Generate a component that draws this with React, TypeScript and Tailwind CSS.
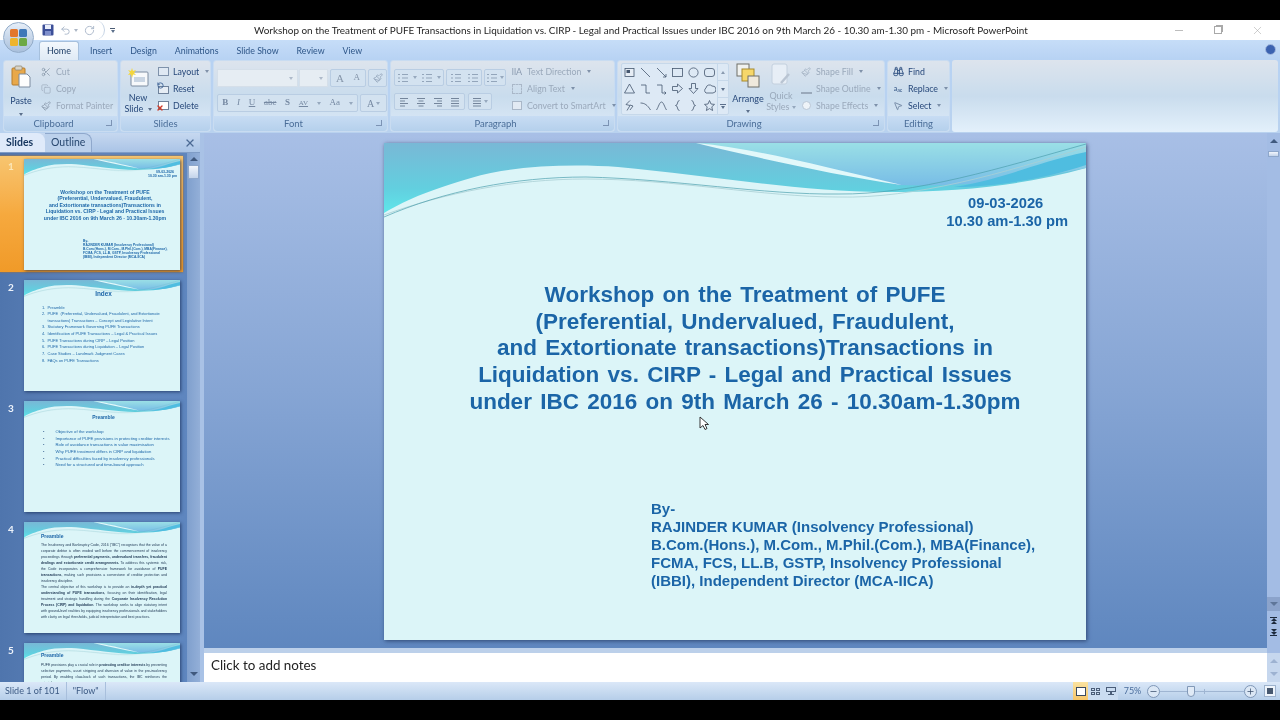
import type { ReactNode } from "react";
import {
  Binoculars,
  Copy,
  Minus,
  MousePointer2,
  Paintbrush,
  Plus,
  RotateCcw,
  Scissors,
  Undo2,
  X,
} from "lucide-react";

const uiFont = "font-['Lato',sans-serif]";
const slideFont = "font-['Liberation_Sans',sans-serif]";

function Wave() {
  return (
    <svg viewBox="0 0 702 80" preserveAspectRatio="none" className="absolute left-0 top-0 w-full h-[16.1%]">
      <defs>
        <linearGradient id="band" x1="0" y1="0" x2="0" y2="1">
          <stop offset="0" stopColor="#79b8d6" />
          <stop offset="0.65" stopColor="#62cfdf" />
          <stop offset="1" stopColor="#5fe6ea" />
        </linearGradient>
        <linearGradient id="corner" x1="0" y1="0" x2="0" y2="1">
          <stop offset="0" stopColor="#9adfe6" />
          <stop offset="1" stopColor="#78bde6" />
        </linearGradient>
      </defs>
      <path d="M0 0H702V25C640 42 580 49 500 49C420 49 320 32 234 24C190 21 130 22 87 35C50 46 25 55 0 70Z" fill="url(#band)" />
      <path d="M312 0H702V25C640 38 580 44 514 42C440 25 370 8 312 0Z" fill="url(#corner)" />
      <path d="M312 0C370 5 440 24 518 42C450 32 370 14 312 0Z" fill="#e2f8fa" />
      <path d="M702 9C650 20 620 36 570 44C610 44 660 36 702 22Z" fill="#4fbde0" />
      <path d="M0 72C60 50 130 36 202 36C290 36 380 54 454 54C530 56 620 30 702 4" fill="none" stroke="#a9cfd4" strokeWidth="0.8" />
      <path d="M0 74C60 48 130 34 202 34C290 36 380 52 454 51C530 52 620 24 702 1" fill="none" stroke="#4c9fae" strokeWidth="0.7" />
    </svg>
  );
}

function SlideThumb({ children }: { children?: ReactNode }) {
  return (
    <div className={`relative w-[156px] h-[111px] shrink-0 overflow-hidden bg-[#dcf5f8] shadow-[1px_1px_3px_rgba(20,40,80,0.7)] ${slideFont}`}>
      <Wave />
      <div className="relative h-full">{children}</div>
    </div>
  );
}

function ThumbRow({ n, active, children }: { n: number; active?: boolean; children: ReactNode }) {
  return (
    <div
      className={
        active
          ? "flex h-[116px] w-[183px] items-center bg-gradient-to-b from-[#f7c56f] via-[#f6a93e] to-[#f09a28] shadow-[0_0_2px_#b87520] pl-[24px] relative"
          : "flex h-[116px] w-[183px] items-center pl-[24px] relative"
      }
    >
      <span className={`absolute left-[8px] top-[3px] text-[10px] font-bold ${active ? "text-[#fbe7b8]" : "text-[#eef3fb]"}`}>{n}</span>
      <SlideThumb>{children}</SlideThumb>
    </div>
  );
}

function BulletThumb() {
  const items = [
    "Objective of the workshop",
    "Importance of PUFE provisions in protecting creditor interests",
    "Role of avoidance transactions in value maximisation",
    "Why PUFE treatment differs in CIRP and liquidation",
    "Practical difficulties faced by insolvency professionals",
    "Need for a structured and time-bound approach",
  ];
  return (
    <div className="pt-[13px] text-[#1d66a8]">
      <p className="text-center text-[5px] font-bold pl-[3px]">Preamble</p>
      <ul className="mt-[9px] ml-[19px] space-y-[2.2px] text-[4.2px] leading-[4.5px]">
        {items.map((t) => (
          <li key={t} className="flex gap-[11px]">
            <span className="text-[#14407a]">•</span>
            <span className="whitespace-nowrap">{t}</span>
          </li>
        ))}
      </ul>
    </div>
  );
}

function SlidesPane() {
  const index = [
    "1.  Preamble",
    "2.  PUFE  (Preferential, Undervalued, Fraudulent, and Extortionate",
    "     transactions) Transactions – Concept and Legislative Intent",
    "3.  Statutory Framework Governing PUFE Transactions",
    "4.  Identification of PUFE Transactions – Legal & Practical Issues",
    "5.  PUFE Transactions during CIRP – Legal Position",
    "6.  PUFE Transactions during Liquidation – Legal Position",
    "7.  Case Studies – Landmark Judgment Cases",
    "8.  FAQs on PUFE Transactions",
  ];
  return (
    <aside className={`w-[200px] shrink-0 flex flex-col bg-[#a9c2e6] ${uiFont}`}>
      <div className="h-[20px] flex items-end relative bg-gradient-to-b from-[#c6d8f0] to-[#aac4e6] border-b border-[#7f9cc6]">
        <div className="w-[45px] h-[19px] bg-[#dfeafa] rounded-tr-[8px] flex items-center pl-[6px] text-[10.5px] font-bold text-[#16365e]">Slides</div>
        <div className="w-[47px] h-[19px] border-t border-r border-[#8fa8cc] rounded-tr-[8px] bg-[#bcd1ec] flex items-center pl-[6px] text-[10.5px] text-[#27466e]">Outline</div>
        <X className="absolute right-[4px] top-[4px] text-[#4c6a94]" size={12} strokeWidth={2.6} />
      </div>
      <div className="flex-1 flex min-h-0">
        <div className="flex-1 min-w-0 overflow-hidden bg-gradient-to-r from-[#4f75ad] via-[#5f84bb] to-[#5e86bf] pt-[3px] space-y-[5px]">
          <ThumbRow n={1} active>
            <div className="pt-[11px] text-[#1d66a8]">
              <div className="pr-[3px] text-right text-[3.5px] leading-[4.5px] font-bold">
                <p className="pr-[3px]">09-03-2026</p>
                <p>10.30 am-1.30 pm</p>
              </div>
              <div className="mt-[10px] pl-[6px] text-center text-[5.15px] leading-[6.5px] font-bold">
                <p>Workshop on the Treatment of PUFE</p>
                <p>(Preferential, Undervalued, Fraudulent,</p>
                <p>and Extortionate transactions)Transactions in</p>
                <p>Liquidation vs. CIRP - Legal and Practical Issues</p>
                <p>under IBC 2016 on 9th March 26 - 10.30am-1.30pm</p>
              </div>
              <div className="mt-[18px] ml-[59px] text-[3.3px] leading-[4px] font-bold whitespace-nowrap">
                <p>By-</p>
                <p>RAJINDER KUMAR (Insolvency Professional)</p>
                <p>B.Com.(Hons.), M.Com., M.Phil.(Com.), MBA(Finance),</p>
                <p>FCMA, FCS, LL.B, GSTP, Insolvency Professional</p>
                <p>(IBBI), Independent Director (MCA-IICA)</p>
              </div>
            </div>
          </ThumbRow>
          <ThumbRow n={2}>
            <div className="pt-[10px] text-[#1d66a8]">
              <p className="text-center text-[6.4px] font-bold leading-[8px] pl-[3px]">Index</p>
              <div className="mt-[7px] ml-[18px] text-[4px] leading-[6.65px] whitespace-pre">
                {index.map((t) => (
                  <p key={t}>{t}</p>
                ))}
              </div>
            </div>
          </ThumbRow>
          <ThumbRow n={3}>
            <BulletThumb />
          </ThumbRow>
          <ThumbRow n={4}>
            <div className="pt-[11px] pl-[17px] pr-[13px]">
              <p className="text-[5px] font-bold text-[#1d66a8] leading-[6px]">Preamble</p>
              <div className="mt-[3px] text-[3.45px] leading-[6px] text-[#1c3552] text-justify">
                <p>
                  The Insolvency and Bankruptcy Code, 2016 ("IBC") recognises that the value of a corporate debtor is often eroded well before the commencement of insolvency proceedings through{" "}
                  <b>preferential payments, undervalued transfers, fraudulent dealings and extortionate credit arrangements.</b> To address this systemic risk, the Code incorporates a comprehensive framework for avoidance of <b>PUFE transactions</b>, making such provisions a cornerstone of creditor protection and insolvency discipline.
                </p>
                <p>
                  The central objective of this workshop is to provide an <b>in-depth yet practical understanding of PUFE transactions</b>, focusing on their identification, legal treatment and strategic handling during the <b>Corporate Insolvency Resolution Process (CIRP) and liquidation</b>. The workshop seeks to align statutory intent with ground-level realities by equipping insolvency professionals and stakeholders with clarity on legal thresholds, judicial interpretation and best practices.
                </p>
              </div>
            </div>
          </ThumbRow>
          <ThumbRow n={5}>
            <div className="pt-[9px] pl-[17px] pr-[13px]">
              <p className="text-[5px] font-bold text-[#1d66a8] leading-[6px]">Preamble</p>
              <p className="mt-[4px] text-[3.45px] leading-[6px] text-[#1c3552] text-justify">
                PUFE provisions play a crucial role in <b>protecting creditor interests</b> by preventing selective payments, asset stripping and diversion of value in the pre-insolvency period. By enabling claw-back of such transactions, the IBC reinforces the principle
              </p>
            </div>
          </ThumbRow>
        </div>
        <div className="w-[13px] shrink-0 bg-gradient-to-r from-[#7f9fcd] to-[#93afd8] flex flex-col items-center">
          <span className="mt-[4px] w-0 h-0 border-x-[4px] border-x-transparent border-b-[4px] border-b-[#40597e]" />
          <span className="mt-[4px] w-[11px] h-[14px] bg-gradient-to-b from-[#f2f6fc] to-[#c3d3ea] border border-[#8ea7cb]" />
          <span className="mt-auto mb-[6px] w-0 h-0 border-x-[4px] border-x-transparent border-t-[4px] border-t-[#40597e]" />
        </div>
      </div>
    </aside>
  );
}

function MainSlide() {
  return (
    <div className={`relative w-[702px] h-[497px] bg-[#dcf5f8] shadow-[1px_1px_4px_rgba(30,50,90,0.75)] ${slideFont} text-[#1b65a7] font-bold`}>
      <Wave />
      <div className="relative h-full pt-[51px] flex flex-col">
        <div className="self-end pr-[18px] text-center text-[14.7px] leading-[18px]">
          <p className="pr-[3px]">09-03-2026</p>
          <p>10.30 am-1.30 pm</p>
        </div>
        <div className="mt-[52px] pl-[20px] text-center text-[22.5px] leading-[26.7px] [word-spacing:2px]">
          <p>Workshop on the Treatment of PUFE</p>
          <p>(Preferential, Undervalued, Fraudulent,</p>
          <p>and Extortionate transactions)Transactions in</p>
          <p>Liquidation vs. CIRP - Legal and Practical Issues</p>
          <p>under IBC 2016 on 9th March 26 - 10.30am-1.30pm</p>
        </div>
        <div className="mt-[84px] ml-[267px] text-[15px] leading-[18px] whitespace-nowrap">
          <p>By-</p>
          <p>RAJINDER KUMAR (Insolvency Professional)</p>
          <p>B.Com.(Hons.), M.Com., M.Phil.(Com.), MBA(Finance),</p>
          <p>FCMA, FCS, LL.B, GSTP, Insolvency Professional</p>
          <p>(IBBI), Independent Director (MCA-IICA)</p>
        </div>
      </div>
    </div>
  );
}

function Group({ label, width, launcher, children }: { label: string; width: string; launcher?: boolean; children: ReactNode }) {
  return (
    <section className={`${width} shrink-0 flex flex-col rounded-[3px] border border-[#c9dcf1] bg-gradient-to-b from-[#dde4ed] via-[#c9dced] to-[#dceaf8]`}>
      <div className="flex-1 min-h-0 flex px-[3px] pt-[2px]">{children}</div>
      <div className={`h-[15px] relative flex items-center justify-center bg-gradient-to-b from-[#c7dcf3] to-[#b5d0ec] text-[9.5px] pt-[1px] text-[#4a6d98] rounded-b-[3px] ${launcher ? "pr-[14px]" : ""}`}>
        {label}
        {launcher && <span className="absolute right-[5px] top-[4px] w-[6px] h-[6px] border-r border-b border-[#7c93b4]" />}
      </div>
    </section>
  );
}

function Caret({ className = "" }: { className?: string }) {
  return <span className={`inline-block w-0 h-0 border-x-[2.5px] border-x-transparent border-t-[3px] border-t-[#5b6f8b] ${className}`} />;
}

function Cmd({ icon, label, off, caret }: { icon: ReactNode; label: string; off?: boolean; caret?: boolean }) {
  return (
    <div className={`h-[17px] flex items-center gap-[3px] text-[8.8px] whitespace-nowrap ${off ? "text-[#9aa9bb]" : "text-[#27487a]"}`}>
      <span className="w-[14px] h-[14px] flex items-center justify-center shrink-0">{icon}</span>
      {label}
      {caret && <Caret className="ml-[3px] opacity-70" />}
    </div>
  );
}

function BoxedRow({ children, className = "" }: { children: ReactNode; className?: string }) {
  return <div className={`h-[17px] flex items-center rounded-[2px] border border-[#b9cde3] bg-[#d3e2f0] ${className}`}>{children}</div>;
}

function ListGlyph() {
  return (
    <svg width="10" height="10" viewBox="0 0 10 10" stroke="#93a5ba" strokeWidth="1">
      <path d="M0 1.500h2M4 1.500h6M0 5h2M4 5h6M0 8.500h2M4 8.500h6" />
    </svg>
  );
}

function AlignGlyph({ v }: { v: number }) {
  const d = ["M1 1.500h8M1 4h5M1 6.500h8M1 9h5", "M1 1.500h8M2.500 4h5M1 6.500h8M2.500 9h5", "M1 1.500h8M4 4h5M1 6.500h8M4 9h5", "M1 1.500h8M1 4h8M1 6.500h8M1 9h8"][v];
  return (
    <svg width="10" height="10" viewBox="0 0 10 10" stroke="#74859b" strokeWidth="1.1">
      <path d={d} />
    </svg>
  );
}

function ShapeGallery() {
  const s = { fill: "none", stroke: "#45576f", strokeWidth: 0.8 };
  const shapes = [
    <g><rect x="2" y="2.500" width="9" height="8" fill="#e6edf5" stroke="#45576f" strokeWidth="0.8" /><rect x="3.500" y="4" width="3.500" height="3" fill="#45576f" /></g>,
    <path d="M2 2l9 9" {...s} />,
    <path d="M2 2l9 9m0-3v3h-3" {...s} />,
    <rect x="1.500" y="2.500" width="10" height="8" {...s} />,
    <circle cx="6.500" cy="6.500" r="4.600" {...s} />,
    <rect x="1.500" y="2.500" width="10" height="8" rx="2.500" {...s} />,
    <path d="M6.500 2l5 9h-10z" {...s} />,
    <path d="M2 3h5v8h4" {...s} />,
    <path d="M2 3h5v8h4m-1.500-1.500L11 11l-1.500 1.500" {...s} />,
    <path d="M1.500 4.500h5V2l5 4.500-5 4.500V8.500h-5z" {...s} />,
    <path d="M4.500 1.500h4v5h2.500l-4.500 5-4.500-5h2.500z" {...s} />,
    <path d="M3 11a3 3 0 0 1 0-5 3.500 3.500 0 0 1 6-2 3 3 0 0 1 1 7z" {...s} />,
    <path d="M7 1.500l-4 4 4 1-3 5M7 6l3 1-3 4" {...s} />,
    <path d="M1.500 4c4 0 7 2 10 7" {...s} />,
    <path d="M1.500 11c2-3 3-8 5-8s3 5 5 8" {...s} />,
    <path d="M8.500 1.500c-3 0-1 5-4 5 3 0 1 5 4 5" {...s} />,
    <path d="M4.500 1.500c3 0 1 5 4 5-3 0-1 5-4 5" {...s} />,
    <path d="M6.500 1.500l1.500 3.500 3.500.4-2.700 2.400.8 3.700-3.100-1.900-3.100 1.900.8-3.700-2.700-2.400 3.500-.4z" {...s} />,
  ];
  return (
    <div className="w-[108px] h-[52px] flex shrink-0 border border-[#c6d8ea] bg-[#dde9f5] rounded-[2px]">
      <div className="w-[96px] grid grid-cols-6 grid-rows-3">
        {shapes.map((sh, i) => (
          <div key={i} className="flex items-center justify-center">
            <svg width="13" height="13" viewBox="0 0 13 13">
              {sh}
            </svg>
          </div>
        ))}
      </div>
      <div className="w-[11px] flex flex-col border-l border-[#c6d8ea] text-[#6b7f99]">
        <span className="flex-1 flex items-center justify-center"><span className="w-0 h-0 border-x-[2.5px] border-x-transparent border-b-[3px] border-b-[#8a9bb0]" /></span>
        <span className="flex-1 flex items-center justify-center border-y border-[#c6d8ea]"><Caret /></span>
        <span className="flex-1 flex flex-col items-center justify-center gap-[1px]"><span className="w-[6px] h-[1px] bg-[#5b6f8b]" /><Caret /></span>
      </div>
    </div>
  );
}

function Ribbon() {
  const tabs = ["Insert", "Design", "Animations", "Slide Show", "Review", "View"];
  return (
    <header className={`shrink-0 ${uiFont}`}>
      <div className="relative h-[20px] bg-white flex items-center">
        <div className="absolute left-[3px] top-[2px] z-10 w-[31px] h-[31px] rounded-full bg-gradient-to-b from-[#e6eef8] to-[#a9c0dc] border border-[#93acc9] flex items-center justify-center">
          <svg width="19" height="19" viewBox="0 0 19 19">
            <rect x="1" y="1" width="8" height="8" rx="1.500" fill="#e2762d" />
            <rect x="10" y="1" width="8" height="8" rx="1.500" fill="#3f78b8" />
            <rect x="1" y="10" width="8" height="8" rx="1.500" fill="#eeb42c" />
            <rect x="10" y="10" width="8" height="8" rx="1.500" fill="#6da944" />
          </svg>
        </div>
        <div className="ml-[33px] h-[20px] w-[72px] flex items-center pl-[9px] rounded-r-full border-r border-[#c5d3e4]">
          <svg width="12" height="12" viewBox="0 0 12 12">
            <rect x="0.500" y="0.500" width="11" height="11" rx="1" fill="#3c4f98" />
            <rect x="3" y="1" width="6" height="4" fill="#e9eefb" />
            <rect x="3" y="7" width="6" height="4" fill="#7f8fcc" />
          </svg>
          <Undo2 size={11} className="ml-[6px] text-[#a8b6c8]" />
          <Caret className="ml-[3px] opacity-50" />
          <RotateCcw size={11} className="ml-[6px] text-[#a8b6c8] -scale-x-100" />
        </div>
        <div className="ml-[5px] flex flex-col items-center gap-[1px]">
          <span className="w-[5px] h-[1px] bg-[#4a5b73]" />
          <Caret />
        </div>
        <h1 className="absolute left-[254px] top-[2px] text-[9.92px] leading-[16px] text-[#252525] whitespace-nowrap">
          Workshop on the Treatment of PUFE Transactions in Liquidation vs. CIRP - Legal and Practical Issues under IBC 2016 on 9th March 26 - 10.30 am-1.30 pm - Microsoft PowerPoint
        </h1>
        <div className="ml-auto flex items-center pr-[16px] text-[#a6a6a6]">
          <span className="w-[8px] h-[1px] bg-[#bdbdbd]" />
          <span className="ml-[31px] relative w-[8px] h-[8px] border border-[#a9a9a9] shadow-[1.500px_-1.500px_0_-0.500px_#a9a9a9]" />
          <X className="ml-[29px]" size={13} strokeWidth={1} />
        </div>
      </div>
      <div className="h-[20px] bg-gradient-to-b from-[#c6ddf8] to-[#b7d2f3] flex items-end pl-[39px] relative">
        <div className="h-[19px] w-[40px] bg-gradient-to-b from-[#f3f8fd] to-[#dfeaf5] border border-b-0 border-[#a6c0dd] rounded-t-[3px] flex items-center justify-center text-[9px] text-[#1d3d66]">Home</div>
        <nav className="h-[19px] flex items-center gap-[18px] pl-[11px] text-[8.8px] text-[#2e5688]">
          {tabs.map((t) => (
            <span key={t}>{t}</span>
          ))}
        </nav>
        <span className="absolute right-[4px] top-[4px] w-[11px] h-[11px] rounded-full bg-[#3b62b0] border border-[#a5bbe0]" />
      </div>
      <div className="h-[73px] flex gap-[2px] pl-[3px] pr-[2px] pb-[1px] bg-gradient-to-b from-[#b7d2f3] to-[#b9d2ef]">
        <Group label="Clipboard" width="w-[115px]" launcher>
          <div className="w-[28px] shrink-0 flex flex-col items-center text-[9px] text-[#27487a]">
            <svg width="20" height="24" viewBox="0 0 20 24" className="mt-[2px] shrink-0">
              <rect x="1" y="3" width="13" height="17" rx="1" fill="#e8a84a" stroke="#b67d2c" />
              <rect x="4" y="1" width="7" height="4" rx="1" fill="#d9d4c8" stroke="#8b7f68" strokeWidth="0.7" />
              <path d="M8 9h8l3 3v10H8z" fill="#fdfdfd" stroke="#7d8ca0" />
            </svg>
            <span className="mt-[5px]">Paste</span>
            <Caret className="mt-[5px]" />
          </div>
          <div className="flex flex-col ml-[4px]">
            <Cmd off icon={<Scissors size={10} className="text-[#8d9cae]" />} label="Cut" />
            <Cmd off icon={<Copy size={10} className="text-[#a5b3c4]" />} label="Copy" />
            <Cmd off icon={<Paintbrush size={10} className="text-[#8d9cae]" />} label="Format Painter" />
          </div>
        </Group>
        <Group label="Slides" width="w-[91px]">
          <div className="w-[28px] shrink-0 flex flex-col items-center text-[9px] leading-[11px] text-[#27487a] text-center whitespace-nowrap">
            <svg width="22" height="19" viewBox="0 0 22 19" className="mt-[5px] shrink-0">
              <rect x="4" y="4" width="17" height="14" rx="1" fill="#f7f9fb" stroke="#7d8ca0" />
              <rect x="7" y="9" width="11" height="5" fill="#c9d5e3" />
              <path d="M5 0l1 3 3-1-2 3 2 2-3-.5L5 10 4 6.500 1 7l2-2.500L1 2l3 1z" fill="#f4d63e" />
            </svg>
            <span className="mt-[5px]">New</span>
            <span>Slide <Caret className="ml-[2px] mb-[1px]" /></span>
          </div>
          <div className="flex flex-col ml-[4px]">
            <Cmd caret icon={<span className="w-[11px] h-[9px] border border-[#7f92ab] bg-[#dfe8f3]" />} label="Layout" />
            <Cmd icon={<span className="relative w-[11px] h-[8px] mt-[3px] border border-[#6f829b] bg-[#e6edf5]"><RotateCcw size={7} className="absolute -left-[2px] -top-[5px] text-[#3a5f93]" strokeWidth={3} /></span>} label="Reset" />
            <Cmd icon={<span className="relative w-[11px] h-[9px] border border-[#6f829b] bg-white"><X size={8} strokeWidth={4} className="absolute -left-[3px] top-[2px] text-[#cf3c2a]" /></span>} label="Delete" />
          </div>
        </Group>
        <Group label="Font" width="w-[175px]" launcher>
          <div className="flex flex-col gap-[7px] pt-[6px]">
            <div className="flex gap-[1px]">
              <div className="w-[81px] h-[18px] bg-[#e6edf3] border border-[#d5dfe9] flex items-center justify-end pr-[4px]"><Caret className="opacity-40" /></div>
              <div className="w-[29px] h-[18px] bg-[#e6edf3] border border-[#d5dfe9] flex items-center justify-end pr-[4px]"><Caret className="opacity-40" /></div>
              <BoxedRow className="w-[36px] h-[18px] ml-[1px] justify-around text-[#8696aa] font-['Liberation_Serif',serif]"><span className="text-[11px]">A</span><span className="text-[9px]">A</span></BoxedRow>
              <BoxedRow className="w-[19px] h-[18px] ml-[1px] justify-center"><Paintbrush size={10} className="text-[#93a5ba]" /></BoxedRow>
            </div>
            <div className="flex gap-[2px]">
              <BoxedRow className="w-[141px] h-[18px] justify-around text-[9px] text-[#7689a2] font-['Liberation_Serif',serif]">
                <b>B</b>
                <i>I</i>
                <u>U</u>
                <span className="line-through">abe</span>
                <b>S</b>
                <span className="text-[7px] underline">AV</span>
                <Caret className="opacity-50" />
                <span>Aa</span>
                <Caret className="opacity-50" />
              </BoxedRow>
              <BoxedRow className="w-[27px] h-[18px] justify-center gap-[2px] text-[10px] text-[#7689a2] font-['Liberation_Serif',serif]">A<Caret className="opacity-50" /></BoxedRow>
            </div>
          </div>
        </Group>
        <Group label="Paragraph" width="w-[225px]" launcher>
          <div className="flex flex-col gap-[7px] pt-[6px] shrink-0">
            <div className="flex gap-[2px]">
              <BoxedRow className="w-[50px] justify-around"><ListGlyph /><Caret className="opacity-50" /><ListGlyph /><Caret className="opacity-50" /></BoxedRow>
              <BoxedRow className="w-[36px] justify-around"><ListGlyph /><ListGlyph /></BoxedRow>
              <BoxedRow className="w-[22px] justify-around"><ListGlyph /><Caret className="opacity-50" /></BoxedRow>
            </div>
            <div className="flex gap-[3px]">
              <BoxedRow className="w-[71px] justify-around"><AlignGlyph v={0} /><AlignGlyph v={1} /><AlignGlyph v={2} /><AlignGlyph v={3} /></BoxedRow>
              <BoxedRow className="w-[24px] justify-center gap-[2px]"><AlignGlyph v={3} /><Caret className="opacity-50" /></BoxedRow>
            </div>
          </div>
          <div className="ml-[4px] flex flex-col">
            <Cmd off caret icon={<span className="text-[9px] leading-none text-[#8a9ab0]">llA</span>} label="Text Direction" />
            <Cmd off caret icon={<span className="w-[10px] h-[10px] border border-dashed border-[#a9b7c8]" />} label="Align Text" />
            <Cmd off caret icon={<span className="w-[10px] h-[9px] border border-[#a9b7c8] bg-[#e2eaf3]" />} label="Convert to SmartArt" />
          </div>
        </Group>
        <Group label="Drawing" width="w-[268px]" launcher>
          <ShapeGallery />
          <div className="w-[38px] shrink-0 flex flex-col items-center text-[9px] text-[#27487a]">
            <svg width="24" height="26" viewBox="0 0 24 26" className="shrink-0">
              <rect x="1" y="1" width="12" height="12" fill="#f1f2ef" stroke="#6f6f68" />
              <rect x="6" y="6" width="12" height="12" fill="#f6d76a" stroke="#a7892c" />
              <rect x="12" y="13" width="11" height="11" fill="#efe9dc" stroke="#6f6f68" />
            </svg>
            <span className="mt-[3px]">Arrange</span>
            <Caret className="mt-[4px]" />
          </div>
          <div className="w-[28px] shrink-0 flex flex-col items-center text-[9px] leading-[11px] text-[#9aa9bb] text-center whitespace-nowrap">
            <svg width="20" height="24" viewBox="0 0 20 24" className="shrink-0">
              <rect x="1" y="1" width="15" height="20" rx="2" fill="#e7eef6" stroke="#c3d0de" />
              <path d="M10 20l8-9" stroke="#b9c4d2" strokeWidth="2.500" />
            </svg>
            <span className="mt-[3px]">Quick</span>
            <span>Styles <Caret className="mb-[1px] opacity-50" /></span>
          </div>
          <div className="ml-[4px] flex flex-col">
            <Cmd off caret icon={<Paintbrush size={10} className="text-[#a5b3c4]" />} label="Shape Fill" />
            <Cmd off caret icon={<span className="w-[11px] h-[10px] border-b-2 border-[#9aa9bb]" />} label="Shape Outline" />
            <Cmd off caret icon={<span className="w-[9px] h-[9px] rounded-full bg-[#eef3f8] border border-[#bac7d6]" />} label="Shape Effects" />
          </div>
        </Group>
        <Group label="Editing" width="w-[63px]">
          <div className="flex flex-col">
            <Cmd icon={<Binoculars size={11} className="text-[#2d4f80]" />} label="Find" />
            <Cmd caret icon={<span className="text-[7px] leading-none text-[#2d4f80]">a<sub>ac</sub></span>} label="Replace" />
            <Cmd caret icon={<MousePointer2 size={10} className="text-[#6a7f9c]" />} label="Select" />
          </div>
        </Group>
        <div className="flex-1 rounded-[3px] bg-gradient-to-b from-[#dde4ed] via-[#c9dced] to-[#e3f0fb]" />
      </div>
    </header>
  );
}

function RightScroll() {
  return (
    <div className="w-[13px] shrink-0 flex flex-col items-center bg-[#a9c2e6]">
      <div className="flex-1 w-full bg-[#a3bce4] flex flex-col items-center">
        <span className="mt-[6px] w-0 h-0 border-x-[4px] border-x-transparent border-b-[4px] border-b-[#40597e]" />
        <span className="mt-[8px] w-[11px] h-[6px] bg-gradient-to-b from-[#f2f6fc] to-[#c3d3ea] border border-[#8ea7cb]" />
        <div className="mt-auto w-full h-[14px] bg-[#8ba3cb] flex items-center justify-center">
          <span className="w-0 h-0 border-x-[4px] border-x-transparent border-t-[4px] border-t-[#5f7699]" />
        </div>
        <div className="mt-[6px] mb-[17px] flex flex-col items-center">
          <span className="w-[7px] h-[1px] bg-[#1d2a3d]" />
          <span className="w-0 h-0 border-x-[3.500px] border-x-transparent border-b-[3px] border-b-[#1d2a3d]" />
          <span className="w-0 h-0 border-x-[3.500px] border-x-transparent border-b-[3px] border-b-[#1d2a3d]" />
          <span className="mt-[5px] w-0 h-0 border-x-[3.500px] border-x-transparent border-t-[3px] border-t-[#1d2a3d]" />
          <span className="w-0 h-0 border-x-[3.500px] border-x-transparent border-t-[3px] border-t-[#1d2a3d]" />
          <span className="w-[7px] h-[1px] bg-[#1d2a3d]" />
        </div>
      </div>
      <div className="h-[29px] w-full bg-[#c6d7ee] flex flex-col items-center justify-between py-[6px]">
        <span className="w-0 h-0 border-x-[4px] border-x-transparent border-b-[4px] border-b-[#9db2d1]" />
        <span className="w-0 h-0 border-x-[4px] border-x-transparent border-t-[4px] border-t-[#9db2d1]" />
      </div>
    </div>
  );
}

function StatusBar() {
  return (
    <footer className={`h-[18px] shrink-0 flex items-center bg-gradient-to-b from-[#dbe8f8] to-[#b6cee9] text-[9px] text-[#3c5a84] ${uiFont}`}>
      <span className="pl-[5px] pr-[6px] border-r border-[#a8bfdc] h-full flex items-center">Slide 1 of 101</span>
      <span className="pl-[6px] pr-[6px] border-r border-[#a8bfdc] h-full flex items-center">"Flow"</span>
      <div className="ml-auto flex items-center h-full">
        <div className="w-[45px] h-full flex items-center bg-[#cadcf1]">
          <span className="w-[15px] h-full flex items-center justify-center bg-gradient-to-b from-[#fbe3a0] to-[#f5c56a]">
            <span className="w-[10px] h-[9px] border border-[#3b4a5f] bg-white" />
          </span>
          <span className="w-[15px] flex justify-center">
            <span className="grid grid-cols-2 gap-[1px]">
              <span className="w-[4px] h-[3px] border border-[#4a5d78]" />
              <span className="w-[4px] h-[3px] border border-[#4a5d78]" />
              <span className="w-[4px] h-[3px] border border-[#4a5d78]" />
              <span className="w-[4px] h-[3px] border border-[#4a5d78]" />
            </span>
          </span>
          <span className="w-[15px] flex flex-col items-center">
            <span className="w-[10px] h-[5px] border border-[#4a5d78]" />
            <span className="w-[2px] h-[2px] bg-[#4a5d78]" />
            <span className="w-[6px] h-[1px] bg-[#4a5d78]" />
          </span>
        </div>
        <span className="w-[29px] text-center text-[#4a6d9c]">75%</span>
        <span className="w-[13px] h-[13px] rounded-full border border-[#7f97b7] flex items-center justify-center bg-[#dbe7f5]"><Minus size={9} className="text-[#3b4f6b]" /></span>
        <div className="relative w-[84px] h-[1px] bg-[#9fb5d2]">
          <span className="absolute left-[27px] -top-[5px] w-[8px] h-[11px] rounded-b-[4px] border border-[#8198b7] bg-[#e0eaf6]" />
          <span className="absolute left-[44px] -top-[2px] w-[1px] h-[5px] bg-[#9fb5d2]" />
        </div>
        <span className="w-[13px] h-[13px] rounded-full border border-[#7f97b7] flex items-center justify-center bg-[#dbe7f5]"><Plus size={9} className="text-[#3b4f6b]" /></span>
        <span className="ml-[7px] mr-[4px] w-[12px] h-[12px] border border-[#9db2cd] bg-[#eef4fb] flex items-center justify-center"><span className="w-[6px] h-[6px] bg-[#47586f]" /></span>
      </div>
    </footer>
  );
}

export default function App() {
  return (
    <div className="w-[1280px] h-[720px] bg-black flex flex-col overflow-hidden pt-[20px] pb-[20px] blur-[0.35px]">
      <Ribbon />
      <div className="flex-1 min-h-0 flex">
        <SlidesPane />
        <div className="flex-1 min-w-0 flex flex-col pl-[4px] bg-[#a9c2e6]">
          <main className="relative flex-1 min-h-0 bg-gradient-to-b from-[#a8bfe6] via-[#86a5d4] to-[#5f87bf] flex justify-center pt-[10px]">
            <div className="pr-[1px]">
              <MainSlide />
            </div>
            <svg width="10" height="14" viewBox="0 0 10 14" className="absolute left-[495px] top-[283px]">
              <path d="M1 1v11l3-2.500 2 4 2-1-2-4h3.500z" fill="#fff" stroke="#222" strokeWidth="0.9" />
            </svg>
          </main>
          <div className="h-[5px] bg-[#bcd0ea]" />
          <div className={`h-[29px] bg-white pl-[7px] pt-[3px] text-[13.4px] leading-[18px] text-[#222] ${uiFont}`}>Click to add notes</div>
        </div>
        <RightScroll />
      </div>
      <StatusBar />
    </div>
  );
}
